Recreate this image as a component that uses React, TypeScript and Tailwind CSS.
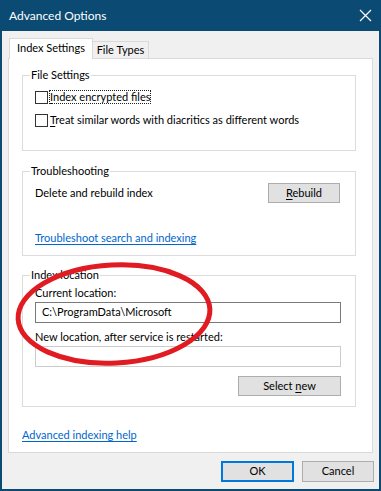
import React from "react";

const font = { fontFamily: 'Lato, "Segoe UI", "Noto Sans", sans-serif' };

function Mn({ children }: { children: React.ReactNode }) {
  return <span className="underline underline-offset-2">{children}</span>;
}

function Checkbox({ children, focused }: { children: React.ReactNode; focused?: boolean }) {
  return (
    <div className="flex h-[16px] items-center">
      <span className="h-[13px] w-[13px] shrink-0 border border-[#333] bg-white" />
      <span
        className={
          "ml-[1px] px-[1px] leading-[14px] " +
          (focused ? "outline outline-1 outline-dotted outline-[#222] -outline-offset-1" : "")
        }
      >
        {children}
      </span>
    </div>
  );
}

function Group({ title, className, children }: { title: string; className: string; children: React.ReactNode }) {
  return (
    <div className={"relative border border-[#dcdcdc] " + className}>
      <span className="absolute left-[7px] top-[-9px] bg-white px-[1px] leading-[16px]">{title}</span>
      {children}
    </div>
  );
}

function WinButton({ children, className, primary }: { children: React.ReactNode; className: string; primary?: boolean }) {
  return (
    <button
      type="button"
      className={
        "flex items-center justify-center bg-[#e1e1e1] text-black " +
        (primary ? "border-2 border-[#0078d7] " : "border border-[#adadad] ") +
        className
      }
    >
      <span>{children}</span>
    </button>
  );
}

export default function App() {
  return (
    <div
      className="relative flex h-[491px] w-[381px] flex-col overflow-hidden border-x-2 border-b-2 border-[#0b4a72] bg-[#f0f0f0] text-[11px] text-black"
      style={font}
    >
      {/* title bar */}
      <div className="flex h-[31px] shrink-0 items-center justify-between bg-[#0b4a72] pl-[7px] pr-[6px] text-white">
        <span className="text-[12px]">Advanced Options</span>
        <svg width="13" height="13" viewBox="0 0 13 13" className="mr-[1px]">
          <path d="M1 1L12 12M12 1L1 12" stroke="#fff" strokeWidth="1.2" />
        </svg>
      </div>

      <div className="flex flex-1 flex-col pl-[6px]">
        {/* tabs */}
        <div className="relative z-10 mb-[-1px] mt-[7px] flex items-end pl-[1px]">
          <div className="flex h-[21px] w-[84px] items-center justify-center border-x border-t border-[#d9d9d9] bg-white pb-[1px]">
            Index Settings
          </div>
          <div className="ml-[-1px] flex h-[18px] w-[57px] items-center justify-center border border-[#d9d9d9] bg-[#f0f0f0]">
            File Types
          </div>
        </div>

        {/* tab panel */}
        <div className="flex h-[395px] w-[365px] flex-col border border-[#d9d9d9] bg-white pl-[13px]">
          <Group title="File Settings" className="mt-[16px] h-[76px] w-[334px] pl-[12px] pt-[13px]">
            <Checkbox focused>
              <Mn>I</Mn>ndex encrypted files
            </Checkbox>
            <div className="mt-[7px]">
              <Checkbox>
                <Mn>T</Mn>reat similar words with diacritics as different words
              </Checkbox>
            </div>
          </Group>

          <Group title="Troubleshooting" className="mt-[20px] h-[85px] w-[334px] pl-[12px] pr-[15px] pt-[11px]">
            <div className="flex h-[20px] items-center justify-between">
              <span>Delete and rebuild index</span>
              <WinButton className="h-[20px] w-[72px]">
                <Mn>R</Mn>ebuild
              </WinButton>
            </div>
            <a className="mt-[27px] block leading-[16px] text-[#0066cc] underline underline-offset-2">
              Troubleshoot search and indexing
            </a>
          </Group>

          <Group title="Index location" className="mt-[19px] h-[132px] w-[334px] pl-[12px] pt-[9px]">
            <div className="leading-[16px]">Current location:</div>
            <div className="mt-[1px] flex h-[21px] w-[306px] items-center border border-[#7a7a7a] bg-white pl-[6px]">
              C:\ProgramData\Microsoft
            </div>
            <div className="mt-[6px] leading-[16px]">New location, after service is restarted:</div>
            <div className="mt-[1px] h-[21px] w-[306px] border border-[#cccccc] bg-white" />
            <div className="mt-[9px] flex w-[306px] justify-end">
              <WinButton className="h-[20px] w-[103px]">
                Select <Mn>n</Mn>ew
              </WinButton>
            </div>
          </Group>

          <a className="mt-[20px] block leading-[16px] text-[#0066cc] underline underline-offset-2">
            Advanced indexing help
          </a>
        </div>

        {/* dialog buttons */}
        <div className="mt-[8px] flex w-[366px] justify-end gap-[8px]">
          <WinButton primary className="h-[21px] w-[73px]">
            OK
          </WinButton>
          <WinButton className="h-[21px] w-[72px]">Cancel</WinButton>
        </div>
      </div>

      {/* red hand-drawn circle */}
      <svg
        className="pointer-events-none absolute left-[-2px] top-0"
        width="381"
        height="491"
        viewBox="0 0 381 491"
      >
        <ellipse
          cx="114"
          cy="314"
          rx="96"
          ry="49"
          transform="rotate(-3 114 314)"
          fill="none"
          stroke="#e01b22"
          strokeWidth="5"
        />
      </svg>
    </div>
  );
}
